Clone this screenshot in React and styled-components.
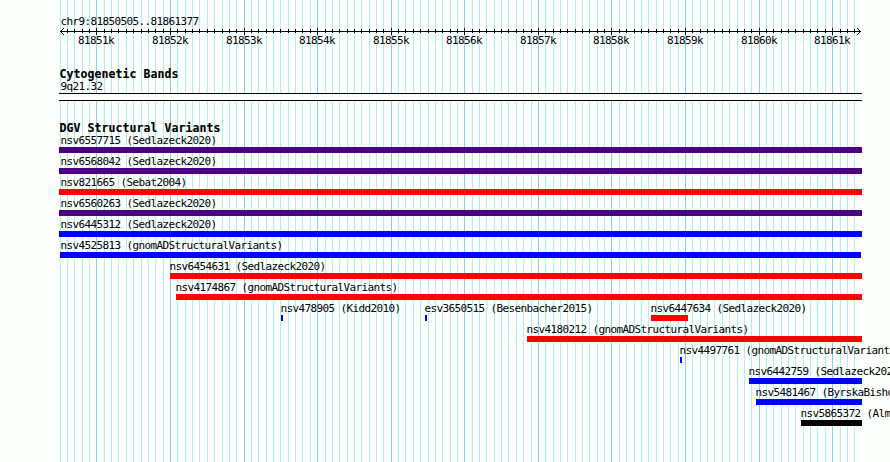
import React from "react";
import styled, { createGlobalStyle } from "styled-components";

const GlobalStyle = createGlobalStyle`
  html, body { margin: 0; padding: 0; background: #fcfffc; overflow: hidden; }
`;

const WIDTH = 890;
const HEIGHT = 462;
const START = 81850505;
const LEFT = 60;
const PX_PER_BP = 800 / 10873;
const toX = (bp) => Math.round(LEFT + (bp - START) * PX_PER_BP);

const TICKS = Array.from({ length: 109 }, (_, i) => {
  const bp = 81850500 + i * 100;
  return { bp, x: toX(bp), major: bp % 1000 === 0 };
});
const MAJORS = TICKS.filter((t) => t.major);

const INDIGO = "#4b0082";
const RED = "#ff0000";
const BLUE = "#0000ff";
const BLACK = "#000000";

const LANES = [
  [{ name: "nsv6557715 (Sedlazeck2020)", x: 59, end: 862, color: INDIGO, indent: 1.5 }],
  [{ name: "nsv6568042 (Sedlazeck2020)", x: 59, end: 862, color: INDIGO, indent: 1.5 }],
  [{ name: "nsv821665 (Sebat2004)", x: 59, end: 862, color: RED, indent: 1.5 }],
  [{ name: "nsv6560263 (Sedlazeck2020)", x: 59, end: 862, color: INDIGO, indent: 1.5 }],
  [{ name: "nsv6445312 (Sedlazeck2020)", x: 59, end: 862, color: BLUE, indent: 1.5 }],
  [{ name: "nsv4525813 (gnomADStructuralVariants)", x: 60, end: 861, color: BLUE, indent: 0.5 }],
  [{ name: "nsv6454631 (Sedlazeck2020)", x: 170, end: 862, color: RED }],
  [{ name: "nsv4174867 (gnomADStructuralVariants)", x: 176, end: 862, color: RED }],
  [
    { name: "nsv478905 (Kidd2010)", x: 281, end: 283, color: BLUE },
    { name: "esv3650515 (Besenbacher2015)", x: 425, end: 427, color: BLUE },
    { name: "nsv6447634 (Sedlazeck2020)", x: 651, end: 688, color: RED },
  ],
  [{ name: "nsv4180212 (gnomADStructuralVariants)", x: 527, end: 862, color: RED }],
  [{ name: "nsv4497761 (gnomADStructuralVariants)", x: 680, end: 682, color: BLUE }],
  [{ name: "nsv6442759 (Sedlazeck2020)", x: 749, end: 862, color: BLUE }],
  [{ name: "nsv5481467 (ByrskaBishop2022)", x: 756, end: 862, color: BLUE }],
  [{ name: "nsv5865372 (Almarri2020)", x: 801, end: 862, color: BLACK }],
];

const Browser = styled.main`
  position: relative;
  isolation: isolate;
  width: ${WIDTH}px;
  height: ${HEIGHT}px;
  overflow: hidden;
  background: #fcfffc;
  color: #000;
  font: 11px/12px "DejaVu Sans Mono", monospace;
  letter-spacing: -0.622px;
  white-space: pre;
`;

const Gridlines = styled.svg`
  position: absolute;
  inset: 0;
  z-index: -1;
`;

const Region = styled.div`
  padding: 16px 0 0 60.5px;
  height: 11px;
`;

const Axis = styled.svg`
  display: block;
  width: 100%;
  height: 8px;
`;

const Scale = styled.div`
  display: grid;
  height: 12px;
`;

const ScaleLabel = styled.span`
  grid-area: 1 / 1;
  margin-left: ${(p) => p.$x - 18}px;
`;

const Track = styled.section`
  padding-top: ${(p) => p.$gap}px;
`;

const TrackTitle = styled.h2`
  margin: 0 0 0 59.5px;
  height: 13px;
  font-size: 11.5px;
  line-height: 13px;
  font-weight: bold;
  letter-spacing: 0.077px;
  -webkit-text-stroke: 0.15px #000;
`;

const BandName = styled.div`
  margin-left: 60.5px;
  height: 12px;
  line-height: 12px;
`;

const Band = styled.div`
  box-sizing: border-box;
  margin-left: 59px;
  width: 803px;
  height: 8px;
  border: solid #000;
  border-width: 1px 0;
  background: #fcfffc;
`;

const Lane = styled.div`
  display: grid;
  height: 21px;
`;

const Feature = styled.div`
  grid-area: 1 / 1;
  width: max-content;
  margin-left: ${(p) => p.$x}px;
`;

const FeatureName = styled.div`
  height: 12px;
  line-height: 12px;
  margin-left: ${(p) => p.$indent}px;
`;

const Bar = styled.div`
  width: ${(p) => p.$width}px;
  height: 6px;
  background: ${(p) => p.$color};
`;

export default function App() {
  return (
    <Browser>
      <GlobalStyle />
      <Gridlines width={WIDTH} height={HEIGHT} shapeRendering="crispEdges" aria-hidden="true">
        {TICKS.map((t) => (
          <rect key={t.bp} x={t.x} y="0" width="1" height={HEIGHT} fill={t.major ? "#87ceeb" : "#afeeee"} />
        ))}
      </Gridlines>
      <Region>chr9:81850505..81861377</Region>
      <Axis viewBox="0 27 890 8" shapeRendering="crispEdges" aria-hidden="true">
        <rect x="60" y="31" width="801" height="1" />
        {TICKS.slice(1).map((t) => (
          <rect key={t.bp} x={t.x} y={t.major ? 28 : 29} width="1" height={t.major ? 7 : 4} />
        ))}
        <path d="M61 30h1v1h-1zM62 29h1v1h-1zM63 28h1v1h-1zM61 32h1v1h-1zM62 33h1v1h-1zM63 34h1v1h-1z" />
        <path d="M859 30h1v1h-1zM858 29h1v1h-1zM857 28h1v1h-1zM859 32h1v1h-1zM858 33h1v1h-1zM857 34h1v1h-1z" />
      </Axis>
      <Scale>
        {MAJORS.map((t) => (
          <ScaleLabel key={t.bp} $x={t.x}>{t.bp / 1000}k</ScaleLabel>
        ))}
      </Scale>
      <Track $gap={21}>
        <TrackTitle>Cytogenetic Bands</TrackTitle>
        <BandName>9q21.32</BandName>
        <Band />
      </Track>
      <Track $gap={21}>
        <TrackTitle>DGV Structural Variants</TrackTitle>
        {LANES.map((lane) => (
          <Lane key={lane[0].name}>
            {lane.map((f) => (
              <Feature key={f.name} $x={f.x}>
                <FeatureName $indent={f.indent ?? -0.5}>{f.name}</FeatureName>
                <Bar $width={f.end - f.x} $color={f.color} />
              </Feature>
            ))}
          </Lane>
        ))}
      </Track>
    </Browser>
  );
}
